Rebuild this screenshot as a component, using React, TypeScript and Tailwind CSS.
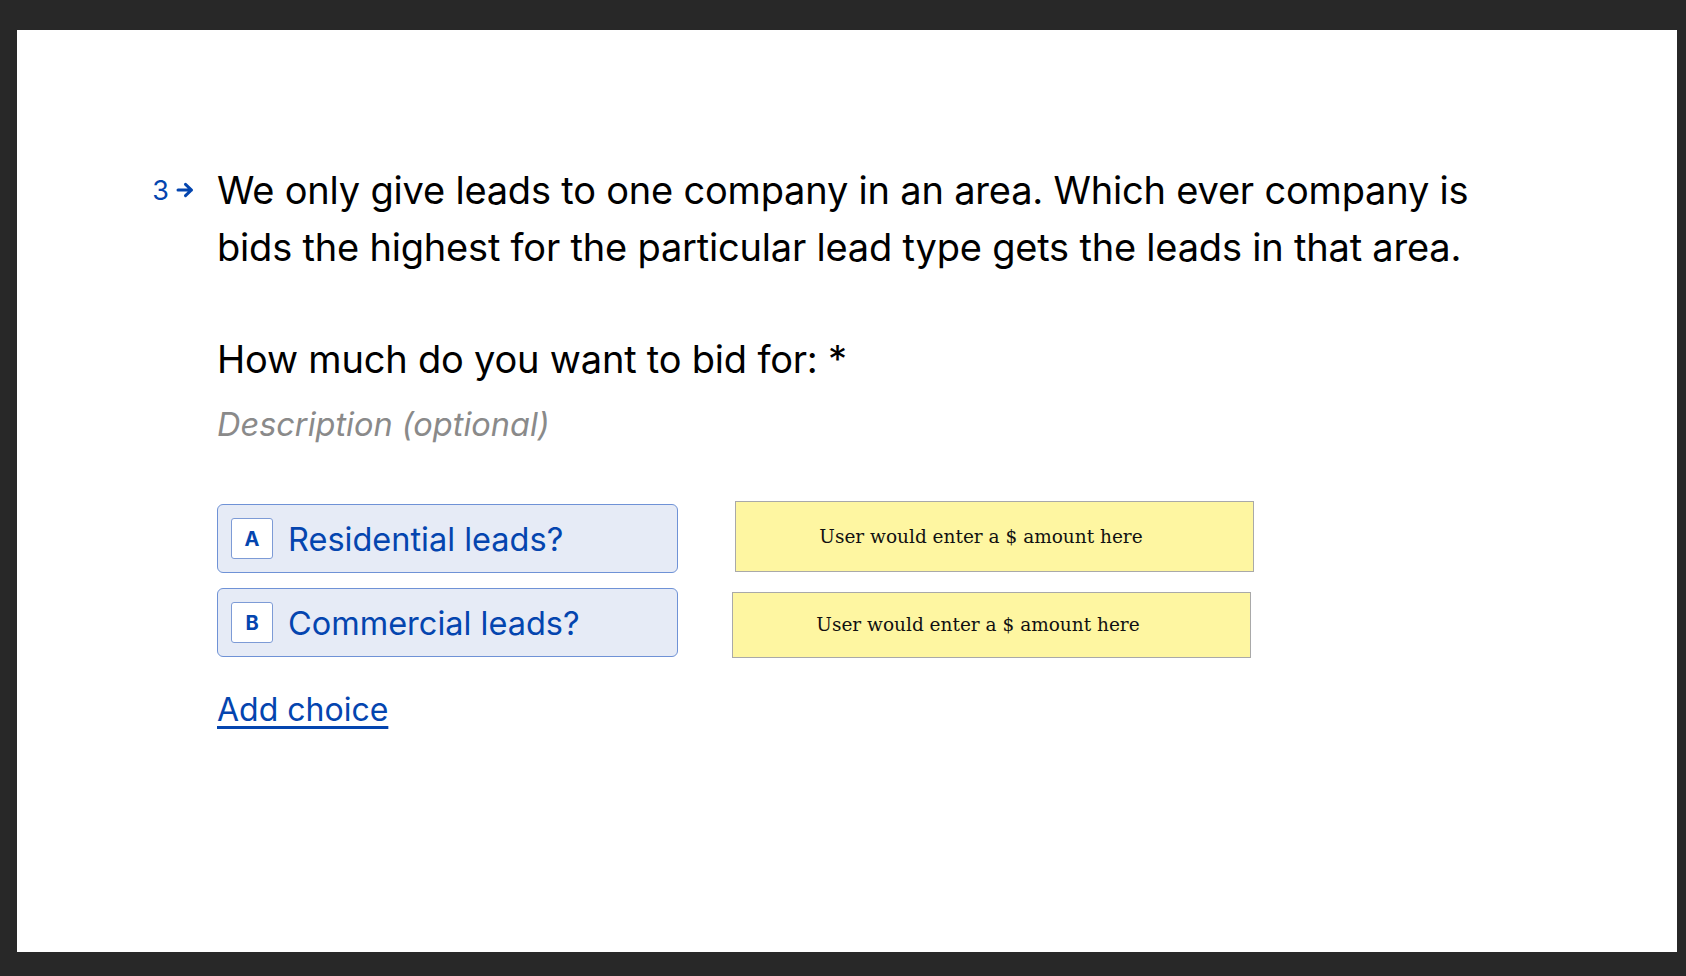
import React from "react";

const choices = [
  { key: "A", label: "Residential leads?", note: "mt-[-3px] ml-[57px] h-[71px]" },
  { key: "B", label: "Commercial leads?", note: "mt-[4px] ml-[54px] h-[66px]" },
];

function ArrowRight() {
  return (
    <svg width="19" height="16" viewBox="0 0 19 16" className="text-[#0445af]">
      <path
        d="M2 8h13.5M9.5 2.3 15.5 8l-6 5.7"
        fill="none"
        stroke="currentColor"
        strokeWidth="3"
        strokeLinecap="round"
        strokeLinejoin="round"
      />
    </svg>
  );
}

export default function App() {
  return (
    <div className="min-h-screen bg-[#282828] pt-[30px] pb-[24px] pl-[17px] pr-[9px]">
      <div className="h-[922px] bg-white font-['Inter',sans-serif]">
        <div className="flex pt-[132px]">
          <div className="flex w-[200px] justify-end pr-[22px] pt-[13px]">
            <div className="flex h-[30px] items-center gap-[7px] text-[27px] text-[#0445af]">
              <span className="leading-none">3</span>
              <ArrowRight />
            </div>
          </div>
          <div className="flex flex-col">
            <p className="w-[1300px] text-[38px] leading-[57px] tracking-[-0.2px] text-black">
              We only give leads to one company in an area. Which ever company is
              <br />
              bids the highest for the particular lead type gets the leads in that area.
            </p>
            <p className="mt-[55px] text-[38px] leading-[57px] tracking-[-0.2px] text-black">
              How much do you want to bid for: *
            </p>
            <p className="mt-[13px] text-[32.5px] italic leading-[48px] text-[#8a8a8a]">
              Description (optional)
            </p>

            <div className="mt-[55px] flex flex-col gap-[15px]">
              {choices.map((c) => (
                <div key={c.key} className="flex items-start">
                  <div className="flex h-[69px] w-[461px] items-center gap-[15px] rounded-[6px] border border-[#6f92d6] bg-[#e6ebf6] pl-[13px]">
                    <span className="flex h-[41px] w-[42px] items-center justify-center rounded-[3px] border border-[#7d9bd6] bg-white text-[20px] font-bold text-[#0445af]">
                      {c.key}
                    </span>
                    <span className="pt-[4px] text-[32.5px] leading-none text-[#0445af]">{c.label}</span>
                  </div>
                  <div
                    className={`${c.note} flex w-[519px] items-center justify-center border border-[#a9a9a9] bg-[#fef6a1] pr-[27px] font-['DejaVu_Serif',serif] text-[18.5px] text-[#111]`}
                  >
                    User would enter a $ amount here
                  </div>
                </div>
              ))}
            </div>

            <a
              href="#"
              className="mt-[28px] w-fit text-[32px] leading-[48px] text-[#0445af] underline decoration-[3px] underline-offset-[5px]"
            >
              Add choice
            </a>
          </div>
        </div>
      </div>
    </div>
  );
}
